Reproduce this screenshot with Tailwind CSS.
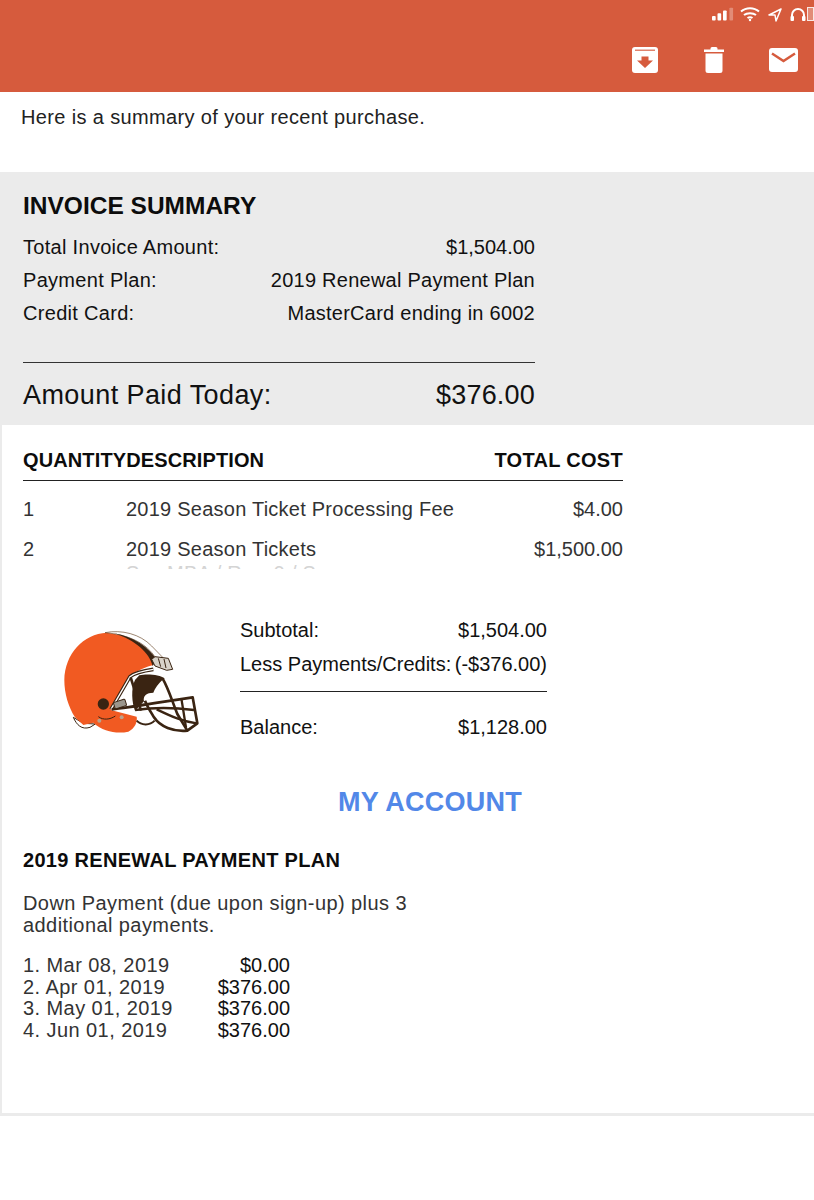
<!DOCTYPE html>
<html>
<head>
<meta charset="utf-8">
<script src="https://cdn.jsdelivr.net/npm/@tailwindcss/browser@4"></script>
</head>
<body class="bg-white font-['Liberation_Sans',Arial,sans-serif] text-[#111]">
<div class="w-[814px] h-[1200px] overflow-hidden">
  <!-- Header -->
  <header class="h-[92px] bg-[#d65b3d] text-white">
    <div class="h-[32px] flex items-start justify-end gap-[7px] pt-[7px]">
      <svg width="22" height="15" viewBox="0 0 24 15" fill="#fff" class="mr-[-1px]"><rect x="0" y="9" width="4" height="5" rx="1"/><rect x="6" y="6" width="4" height="8" rx="1"/><rect x="12" y="3" width="4" height="11" rx="1"/><rect x="19" y="0" width="4" height="14" rx="1" opacity=".3"/></svg>
      <svg width="20" height="15" viewBox="0 0 20 15" fill="none" stroke="#fff" stroke-width="2"><path d="M1 4.500c5-4.500 13-4.500 18 0"/><path d="M4 8c3-2.500 9-2.500 12 0"/><path d="M7.500 11c1.500-1 3.500-1 5 0"/><circle cx="10" cy="13" r="1.200" fill="#fff" stroke="none"/></svg>
      <svg width="14" height="15" viewBox="0 0 14 15" fill="none" stroke="#fff" stroke-width="1.500" stroke-linejoin="round" class="ml-[1px]"><path d="M13 2 1 8h6l1 6z"/></svg>
      <div class="flex items-start gap-[1px] ml-[1px]">
        <svg width="16" height="15" viewBox="0 0 16 15" fill="none" stroke="#fff" stroke-width="2"><path d="M2 13V8a6 6 0 0 1 12 0v5"/><rect x="0.500" y="9" width="3.500" height="5" rx="1" fill="#fff" stroke="none"/><rect x="12" y="9" width="3.500" height="5" rx="1" fill="#fff" stroke="none"/></svg>
        <div class="w-[7px] h-[14px] border border-white/80 bg-white/30"></div>
      </div>
    </div>
    <div class="h-[60px] flex items-start justify-end pr-[16px] pt-[15px]">
      <svg width="26" height="26" viewBox="0 0 26 26" class="mr-[46px]"><path fill="#fff" d="M3 0h20a3 3 0 0 1 3 3v20a3 3 0 0 1-3 3H3a3 3 0 0 1-3-3V3a3 3 0 0 1 3-3z"/><rect x="3" y="2.500" width="20" height="1.500" fill="#d65b3d" opacity=".75"/><path fill="#d65b3d" d="M9.500 9.500h7v4H21l-8 7.500-8-7.500h4.500z"/></svg>
      <svg width="20" height="26" viewBox="0 0 20 26" class="mr-[45px]"><path fill="#fff" d="M0 2.500h6.500V1.500A1.500 1.500 0 0 1 8 0h4a1.500 1.500 0 0 1 1.500 1.500v1H20V5H0z"/><path fill="#fff" d="M1.500 6.500h17v17a2.500 2.500 0 0 1-2.500 2.500H4a2.500 2.500 0 0 1-2.500-2.500z"/></svg>
      <svg width="29" height="24" viewBox="0 0 29 24" class="mt-[1px]"><rect width="29" height="24" rx="3" fill="#fff"/><path d="M3 5.500 14.500 13 26 5.500" fill="none" stroke="#d65b3d" stroke-width="2.500"/></svg>
    </div>
  </header>

  <!-- Intro -->
  <p class="h-[80px] pl-[21px] pt-[13px] text-[20px] leading-[24px] tracking-[0.36px] text-[#222]">Here is a summary of your recent purchase.</p>

  <!-- Invoice summary -->
  <section class="h-[253px] bg-[#ebebeb] pl-[23px] pt-[20px]">
    <div class="w-[512px]">
      <h2 class="text-[24.500px] leading-[28px] font-bold text-[#0c0c0c]">INVOICE SUMMARY</h2>
      <div class="mt-[15px] space-y-[9px] text-[20px] leading-[24px]">
        <div class="flex justify-between"><span class="tracking-[0.3px]">Total Invoice Amount:</span><span>$1,504.00</span></div>
        <div class="flex justify-between"><span class="tracking-[0.3px]">Payment Plan:</span><span class="tracking-[0.25px]">2019 Renewal Payment Plan</span></div>
        <div class="flex justify-between"><span class="tracking-[0.3px]">Credit Card:</span><span class="tracking-[0.25px]">MasterCard ending in 6002</span></div>
      </div>
      <div class="mt-[37px] border-t border-[#333]"></div>
      <div class="mt-[16px] flex justify-between text-[27px] leading-[32px]"><span class="tracking-[0.42px]">Amount Paid Today:</span><span class="tracking-[0.2px]">$376.00</span></div>
    </div>
  </section>

  <!-- Receipt -->
  <main class="h-[691px] border-l-2 border-b-[3px] border-[#ebebeb] pl-[21px]">
    <div class="w-[600px] pt-[23px]">
      <div class="flex justify-between h-[33px] border-b border-[#222] text-[20px] leading-[24px] font-bold text-[#0c0c0c]">
        <span class="tracking-[0.12px]">QUANTITYDESCRIPTION</span><span class="tracking-[0.3px]">TOTAL COST</span>
      </div>
      <div class="h-[88px] overflow-hidden text-[20px] leading-[24px] text-[#333]">
        <div class="flex mt-[16px]"><span class="w-[103px] shrink-0">1</span><span class="flex-1 tracking-[0.24px]">2019 Season Ticket Processing Fee</span><span>$4.00</span></div>
        <div class="flex mt-[16px]"><span class="w-[103px] shrink-0">2</span><span class="flex-1 tracking-[0.24px]">2019 Season Tickets</span><span>$1,500.00</span></div>
        <div class="flex text-[#d4d4d4]"><span class="w-[103px] shrink-0"></span><span class="flex-1 tracking-[0.24px]">Sec MBA / Row 9 / S</span></div>
      </div>
    </div>

    <div class="flex mt-[40px]">
      <!-- Helmet -->
      <svg width="180" height="140" viewBox="0 0 540 420" class="ml-[17px] mt-[1px] shrink-0">
        <path fill="#fff" stroke="#3a2412" stroke-width="3" d="M100 322C110 345 125 360 150 352L166 342 130 340z"/>
        <path fill="#f15a22" d="M200 68C130 72 75 130 73 210 73 250 85 290 105 322L130 345 160 338C190 365 230 372 265 365 285 355 293 335 290 320L212 300 275 195C295 180 320 170 340 165 335 120 280 75 200 68z"/>
        <path fill="#fff" stroke="#6b4a2c" stroke-width="2" d="M195 68C245 58 300 72 335 108L368 142 350 150C330 110 280 75 195 68z"/>
        <path fill="#3a2412" d="M222 70C280 80 328 112 350 150L338 168C328 128 285 90 222 70z"/>
        <path fill="#3a2412" d="M298 196C320 190 360 194 374 205 352 222 346 235 340 248 320 248 308 258 312 274L285 302C276 280 272 235 285 210z"/>
        <circle cx="190" cy="282" r="17" fill="#3a2412"/>
        <g fill="none" stroke="#3a2412" stroke-linejoin="round">
          <path stroke-width="11" d="M340 178C305 183 282 190 270 200L213 298"/>
          <path stroke="#fff" stroke-width="4" d="M340 178C305 183 282 190 270 200L213 298"/>
          <path stroke-width="8" d="M272 202 303 302"/>
          <path stroke-width="8" d="M215 298C280 292 380 272 458 262L472 340 442 362C400 366 360 350 342 322 330 302 322 290 315 272"/>
          <path stroke-width="8" d="M285 300C340 292 400 292 462 300"/>
          <path stroke-width="8" d="M368 206C385 235 395 270 412 312L442 362"/>
          <path stroke-width="7" d="M350 298C400 322 430 335 470 340"/>
          <path stroke-width="7" d="M424 265 438 352"/>
          <path stroke-width="6" d="M290 332C305 348 330 346 344 332"/>
          <path stroke-width="3" d="M175 320C190 331 210 329 226 318"/>
        </g>
        <path fill="#d8d2c8" stroke="#3a2412" stroke-width="3" d="M335 148 345 140 385 145 398 178 380 181 345 168z"/>
        <path fill="none" stroke="#3a2412" stroke-width="3" d="M355 145 362 170M372 147 378 174"/>
        <rect x="222" y="272" width="36" height="20" rx="3" fill="#9b968c" stroke="#3a2412" stroke-width="3" transform="rotate(-18 240 282)"/>
        <circle cx="178" cy="332" r="6" fill="#b9a28c"/><circle cx="245" cy="322" r="6" fill="#b9a28c"/>
      </svg>
      <!-- Totals -->
      <div class="ml-[20px] w-[307px] text-[20px] leading-[24px] text-[#111]">
        <div class="flex justify-between mt-[9px]"><span>Subtotal:</span><span>$1,504.00</span></div>
        <div class="flex justify-between mt-[10px] h-[28px]"><span>Less Payments/Credits:</span><span>(-$376.00)</span></div>
        <div class="mt-[11px] border-t border-[#222]"></div>
        <div class="flex justify-between mt-[23px]"><span>Balance:</span><span>$1,128.00</span></div>
      </div>
    </div>

    <div class="mt-[35px] pl-[315px] text-[27px] leading-[34px] font-bold tracking-[0.25px] text-[#5288e8]">MY ACCOUNT</div>

    <h3 class="mt-[29px] text-[20px] leading-[24px] font-bold tracking-[0.3px] text-[#0c0c0c]">2019 RENEWAL PAYMENT PLAN</h3>
    <p class="mt-[20px] text-[20px] leading-[22px] tracking-[0.42px] text-[#333] w-[420px]">Down Payment (due upon sign-up) plus 3 additional payments.</p>
    <div class="mt-[19px] w-[267px] text-[20px] leading-[21.700px] text-[#111]">
      <div class="flex justify-between"><span class="tracking-[0.43px] text-[#333]">1. Mar 08, 2019</span><span>$0.00</span></div>
      <div class="flex justify-between"><span class="tracking-[0.43px] text-[#333]">2. Apr 01, 2019</span><span>$376.00</span></div>
      <div class="flex justify-between"><span class="tracking-[0.43px] text-[#333]">3. May 01, 2019</span><span>$376.00</span></div>
      <div class="flex justify-between"><span class="tracking-[0.43px] text-[#333]">4. Jun 01, 2019</span><span>$376.00</span></div>
    </div>
  </main>
</div>
</body>
</html>
